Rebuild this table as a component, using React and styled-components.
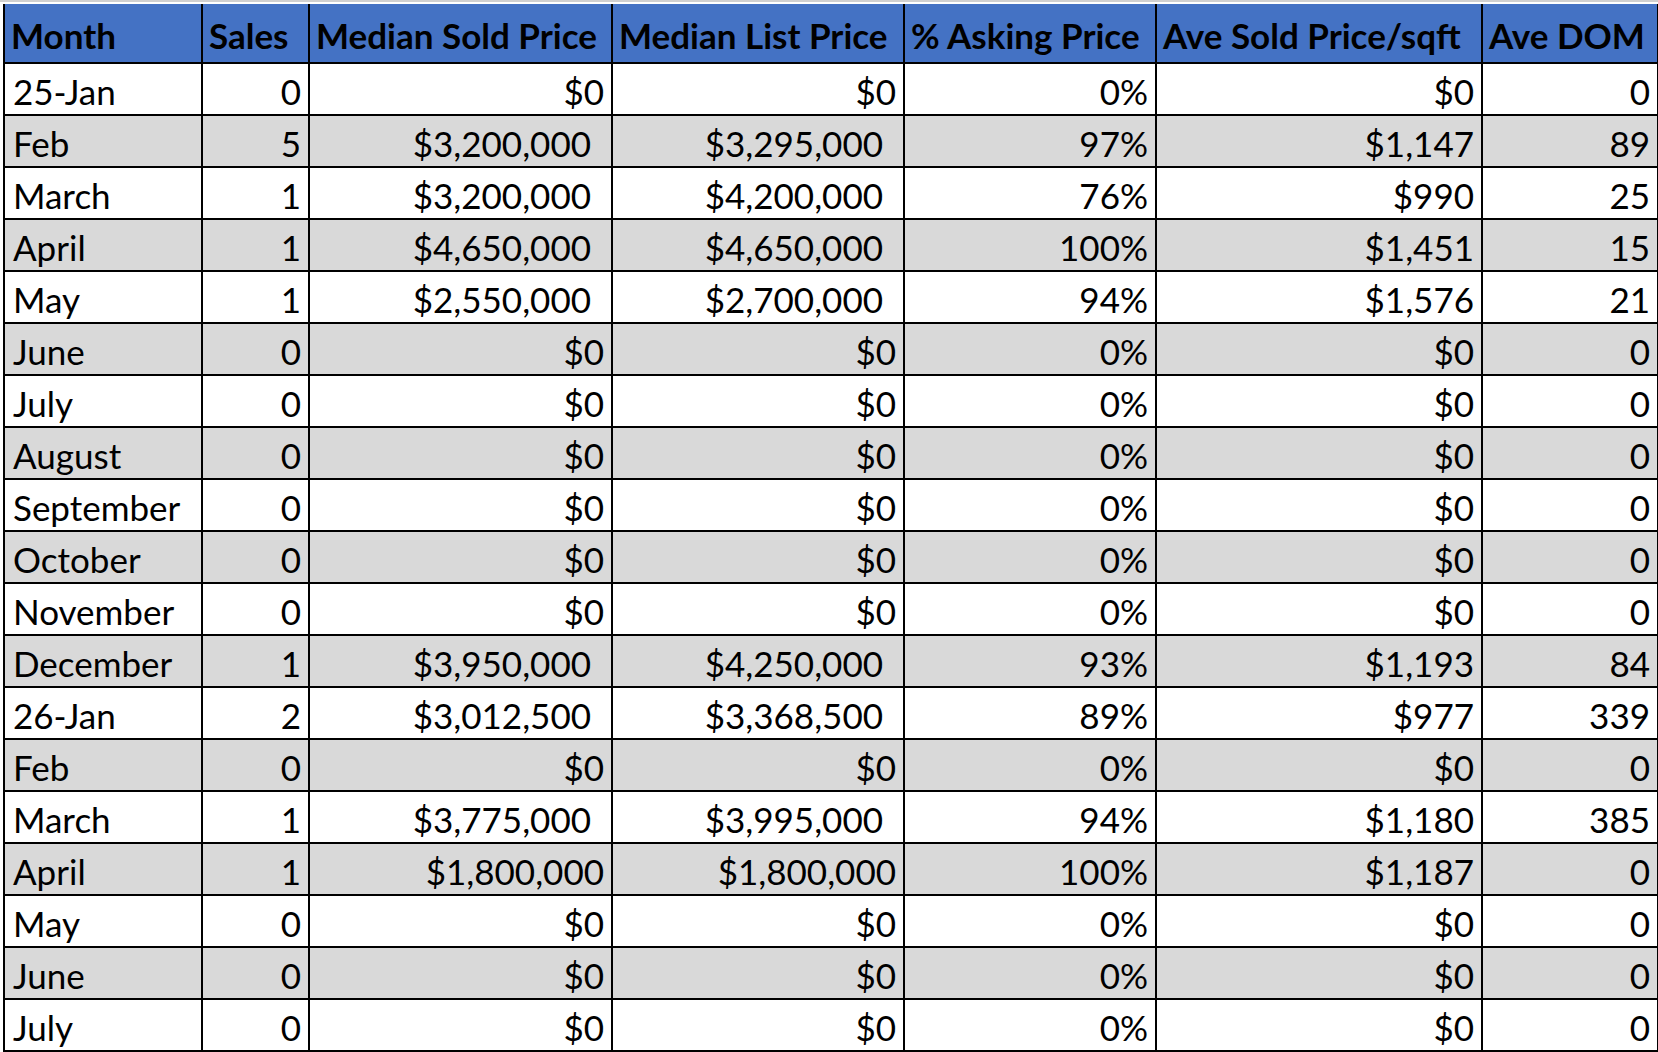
import React from "react";
import styled, { createGlobalStyle } from "styled-components";

const GlobalStyle = createGlobalStyle`
  html, body {
    margin: 0;
    padding: 0;
    background: #ffffff;
  }
  body {
    font-family: Lato, "Open Sans", "Liberation Sans", sans-serif;
    color: #000000;
  }
`;

const Sheet = styled.div`
  padding: 2px 0 0 3px;
  border-top: 2px solid #d0d0d0;
  background: #ffffff;
`;

const Table = styled.table`
  border-collapse: collapse;
  table-layout: fixed;
  width: 1654px;
  border: 2px solid #000000;
  border-top: none;
`;

const HeadCell = styled.th`
  height: 59px;
  box-sizing: border-box;
  padding: 0 0 9px 6px;
  background: #4472c4;
  border: 2px solid #000000;
  border-top: none;
  font-size: 35px;
  font-weight: 700;
  line-height: 1;
  text-align: left;
  vertical-align: bottom;
  white-space: nowrap;
  overflow: hidden;
`;

const Row = styled.tr`
  background: ${({ $shaded }) => ($shaded ? "#d9d9d9" : "#ffffff")};
`;

const Cell = styled.td`
  height: 52px;
  box-sizing: border-box;
  padding: 0 ${({ $pad }) => ($pad ? 20 : 7)}px 5px 8px;
  border: 2px solid #000000;
  font-size: 35px;
  font-weight: 400;
  line-height: 1;
  text-align: ${({ $left }) => ($left ? "left" : "right")};
  vertical-align: bottom;
  white-space: nowrap;
  overflow: hidden;
`;

const columns = [
  { title: "Month", width: 198 },
  { title: "Sales", width: 107 },
  { title: "Median Sold Price", width: 303 },
  { title: "Median List Price", width: 292 },
  { title: "% Asking Price", width: 252 },
  { title: "Ave Sold Price/sqft", width: 326 },
  { title: "Ave DOM", width: 176 },
];

const zero = (month) => [month, "0", "$0", "$0", "0%", "$0", "0"];

const rows = [
  { cells: zero("25-Jan") },
  { cells: ["Feb", "5", "$3,200,000", "$3,295,000", "97%", "$1,147", "89"], pad: true },
  { cells: ["March", "1", "$3,200,000", "$4,200,000", "76%", "$990", "25"], pad: true },
  { cells: ["April", "1", "$4,650,000", "$4,650,000", "100%", "$1,451", "15"], pad: true },
  { cells: ["May", "1", "$2,550,000", "$2,700,000", "94%", "$1,576", "21"], pad: true },
  { cells: zero("June") },
  { cells: zero("July") },
  { cells: zero("August") },
  { cells: zero("September") },
  { cells: zero("October") },
  { cells: zero("November") },
  { cells: ["December", "1", "$3,950,000", "$4,250,000", "93%", "$1,193", "84"], pad: true },
  { cells: ["26-Jan", "2", "$3,012,500", "$3,368,500", "89%", "$977", "339"], pad: true },
  { cells: zero("Feb") },
  { cells: ["March", "1", "$3,775,000", "$3,995,000", "94%", "$1,180", "385"], pad: true },
  { cells: ["April", "1", "$1,800,000", "$1,800,000", "100%", "$1,187", "0"] },
  { cells: zero("May") },
  { cells: zero("June") },
  { cells: zero("July") },
];

export default function App() {
  return (
    <>
      <GlobalStyle />
      <Sheet>
        <Table>
          <colgroup>
            {columns.map((col) => (
              <col key={col.title} style={{ width: col.width }} />
            ))}
          </colgroup>
          <thead>
            <tr>
              {columns.map((col) => (
                <HeadCell key={col.title}>{col.title}</HeadCell>
              ))}
            </tr>
          </thead>
          <tbody>
            {rows.map((row, i) => (
              <Row key={i} $shaded={i % 2 === 1}>
                {row.cells.map((value, j) => (
                  <Cell key={j} $left={j === 0} $pad={row.pad && (j === 2 || j === 3)}>
                    {value}
                  </Cell>
                ))}
              </Row>
            ))}
          </tbody>
        </Table>
      </Sheet>
    </>
  );
}
